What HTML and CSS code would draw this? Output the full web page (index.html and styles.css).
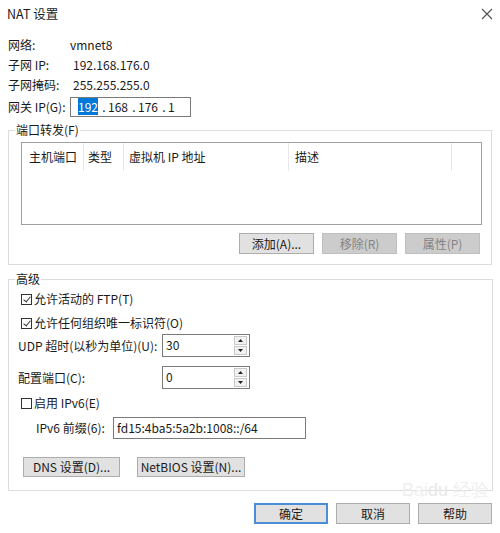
FILE: index.html
```html
<!DOCTYPE html>
<html>
<head>
<meta charset="UTF-8">
<title>NAT 设置</title>
<link rel="stylesheet" href="styles.css">
</head>
<body>
<div class="dialog">
  <div class="titlebar">
    <span class="title">NAT 设置</span>
    <svg class="close" width="12" height="12" viewBox="0 0 12 12"><path d="M1 1L11 11M11 1L1 11" stroke="#555" stroke-width="1.2" fill="none"/></svg>
  </div>

  <div class="info">
    <span>网络:</span><span>vmnet8</span>
    <span>子网 IP:</span><span class="val">192.168.176.0</span>
    <span>子网掩码:</span><span class="val">255.255.255.0</span>
  </div>
  <div class="gateway">
    <span class="glabel">网关 IP(G):</span>
    <div class="ipbox">
      <span class="oct first"><span class="sel">192</span></span>
      <span class="dot">.</span><span class="oct">168</span>
      <span class="dot">.</span><span class="oct">176</span>
      <span class="dot">.</span><span class="oct">1</span>
    </div>
  </div>

  <fieldset class="group ports">
    <legend>端口转发(F)</legend>
    <div class="list">
      <div class="list-head">
        <span class="col c1">主机端口</span>
        <span class="col c2">类型</span>
        <span class="col c3">虚拟机 IP 地址</span>
        <span class="col c4">描述</span>
        <span class="col c5"></span>
      </div>
    </div>
    <div class="btnrow">
      <button class="btn">添加(A)...</button>
      <button class="btn off">移除(R)</button>
      <button class="btn off">属性(P)</button>
    </div>
  </fieldset>

  <fieldset class="group adv">
    <legend>高级</legend>
    <label class="check first"><span class="box on"></span>允许活动的 FTP(T)</label>
    <label class="check second"><span class="box on"></span>允许任何组织唯一标识符(O)</label>

    <div class="field udp">
      <span>UDP 超时(以秒为单位)(U):</span>
      <div class="spin"><span class="spin-val">30</span>
        <div class="arrows">
          <span class="arr"><svg width="5" height="3" viewBox="0 0 5 3"><path d="M0 3L2.5 0L5 3Z" fill="#222"/></svg></span>
          <span class="arr"><svg width="5" height="3" viewBox="0 0 5 3"><path d="M0 0L2.5 3L5 0Z" fill="#222"/></svg></span>
        </div>
      </div>
    </div>
    <div class="field port">
      <span>配置端口(C):</span>
      <div class="spin"><span class="spin-val">0</span>
        <div class="arrows">
          <span class="arr"><svg width="5" height="3" viewBox="0 0 5 3"><path d="M0 3L2.5 0L5 3Z" fill="#222"/></svg></span>
          <span class="arr"><svg width="5" height="3" viewBox="0 0 5 3"><path d="M0 0L2.5 3L5 0Z" fill="#222"/></svg></span>
        </div>
      </div>
    </div>

    <label class="check ipv6"><span class="box"></span>启用 IPv6(E)</label>
    <div class="prefix">
      <span>IPv6 前缀(6):</span>
      <div class="textbox">fd15:4ba5:5a2b:1008::/64</div>
    </div>

    <div class="btnrow left">
      <button class="btn dns">DNS 设置(D)...</button>
      <button class="btn netbios">NetBIOS 设置(N)...</button>
    </div>
  </fieldset>

  <div class="footer">
    <button class="btn main">确定</button>
    <button class="btn">取消</button>
    <button class="btn">帮助</button>
  </div>

  <div class="mark">Bai<span>du</span> 经验</div>
</div>
</body>
</html>
```

FILE: styles.css
```css
body {
    margin: 0;
    background: #fff;
    font-family: "Noto Sans CJK SC", "Noto Sans", sans-serif;
    font-size: 12px;
    line-height: 16px;
    color: #1a1a1a;
    white-space: nowrap;
}
.dialog {
    position: relative;
    width: 500px;
    height: 533px;
    background: #fff;
}
.titlebar {
    height: 28px;
    padding: 0 7px 0 7px;
    display: flex;
    align-items: center;
    justify-content: space-between;
}
.title {
    font-size: 12.5px;
}
.info {
    display: grid;
    grid-template-columns: 62px auto;
    grid-auto-rows: 20px;
    align-items: center;
    padding: 7px 8px 0;
}
.info .val {
    padding-left: 3px;
}
.gateway {
    display: flex;
    align-items: center;
    padding: 2px 8px 0;
}
.glabel {
    width: 62px;
}
.ipbox {
    width: 121px;
    height: 20px;
    box-sizing: border-box;
    border: 1px solid #7a7a7a;
    display: flex;
    align-items: center;
    padding-left: 7px;
}
.oct {
    display: inline-block;
    width: 22px;
    text-align: left;
}
.oct.first {
    width: 22px;
}
.dot {
    width: 8px;
    text-align: center;
}
.sel {
    background: #0078d7;
    color: #fff;
}
.group {
    margin: 5px 8px 0;
    padding: 0 9px 10px 12px;
    border: 1px solid #dcdcdc;
}
.group legend {
    margin-left: -6px;
    padding: 0 1px;
    line-height: 16px;
}
.list {
    margin-top: 4px;
    height: 83px;
    box-sizing: border-box;
    border: 1px solid #a0a0a0;
}
.list-head {
    display: flex;
    height: 28px;
}
.col {
    box-sizing: border-box;
    border-right: 1px solid #e8e8e8;
    padding: 6px 0 0 7px;
}
.c1 { width: 62px; }
.c2 { width: 40px; padding-left: 4px; }
.c3 { width: 165px; padding-left: 5px; }
.c4 { width: 163px; padding-left: 6px; }
.c5 { width: 20px; border-right: none; }
.btnrow {
    display: flex;
    justify-content: flex-end;
    gap: 8px;
    margin: 8px 2px 0 0;
}
.btnrow.left {
    justify-content: flex-start;
    gap: 17px;
    margin: 18px 0 0 5px;
}
.btn {
    width: 75px;
    height: 21px;
    padding: 0;
    background: #e1e1e1;
    border: 1px solid #adadad;
    font-family: inherit;
    font-size: 12px;
    line-height: 16px;
    color: #1a1a1a;
}
.btn.off {
    background: #cccccc;
    border-color: #bfbfbf;
    color: #838383;
}
.btn.dns {
    width: 97px;
    height: 20px;
}
.btn.netbios {
    width: 108px;
    height: 20px;
}
.adv {
    margin: 6px 7px 0 8px;
    padding: 0 9px 13px 9px;
}
.adv legend {
    margin-left: -3px;
}
.check {
    display: flex;
    align-items: center;
    height: 20px;
    margin-left: 3px;
}
.check.first {
    margin-top: 2px;
}
.check.second {
    margin-top: 4px;
}
.check.ipv6 {
    margin-top: 4px;
}
.box {
    width: 11px;
    height: 11px;
    box-sizing: border-box;
    border: 1px solid #333;
    margin-right: 2px;
    position: relative;
}
.box.on::after {
    content: "";
    position: absolute;
    left: 3px;
    top: 0px;
    width: 3px;
    height: 6px;
    border: solid #333;
    border-width: 0 1px 1px 0;
    transform: rotate(40deg);
}
.field {
    display: grid;
    grid-template-columns: 144px 88px;
    align-items: center;
}
.field.udp {
    margin-top: 1px;
}
.field.port {
    margin-top: 9px;
}
.spin {
    height: 23px;
    box-sizing: border-box;
    border: 1px solid #7a7a7a;
    display: flex;
    justify-content: space-between;
    padding: 1px 2px 1px 3px;
}
.spin-val {
    line-height: 18px;
}
.arrows {
    display: flex;
    flex-direction: column;
    gap: 1px;
}
.arr {
    width: 13px;
    height: 9px;
    box-sizing: border-box;
    border: 1px solid #c8c8c8;
    background: #f2f2f2;
    display: flex;
    align-items: center;
    justify-content: center;
}
.prefix {
    display: flex;
    align-items: center;
    margin-top: 4px;
    padding-left: 18px;
}
.prefix span {
    width: 77px;
}
.textbox {
    width: 193px;
    height: 22px;
    box-sizing: border-box;
    border: 1px solid #7a7a7a;
    padding: 2px 3px;
}
.footer {
    display: flex;
    justify-content: flex-end;
    gap: 8px;
    margin: 12px 8px 0 0;
}
.footer .btn {
    width: 74px;
    height: 21px;
}
.btn.main {
    border: 2px solid #4a8fd6;
}
.mark {
    position: absolute;
    left: 402px;
    top: 482px;
    font-family: "Liberation Sans", sans-serif;
    font-size: 18px;
    color: #efefef;
    pointer-events: none;
}
.mark span {
    color: #e8e8e8;
}
```
